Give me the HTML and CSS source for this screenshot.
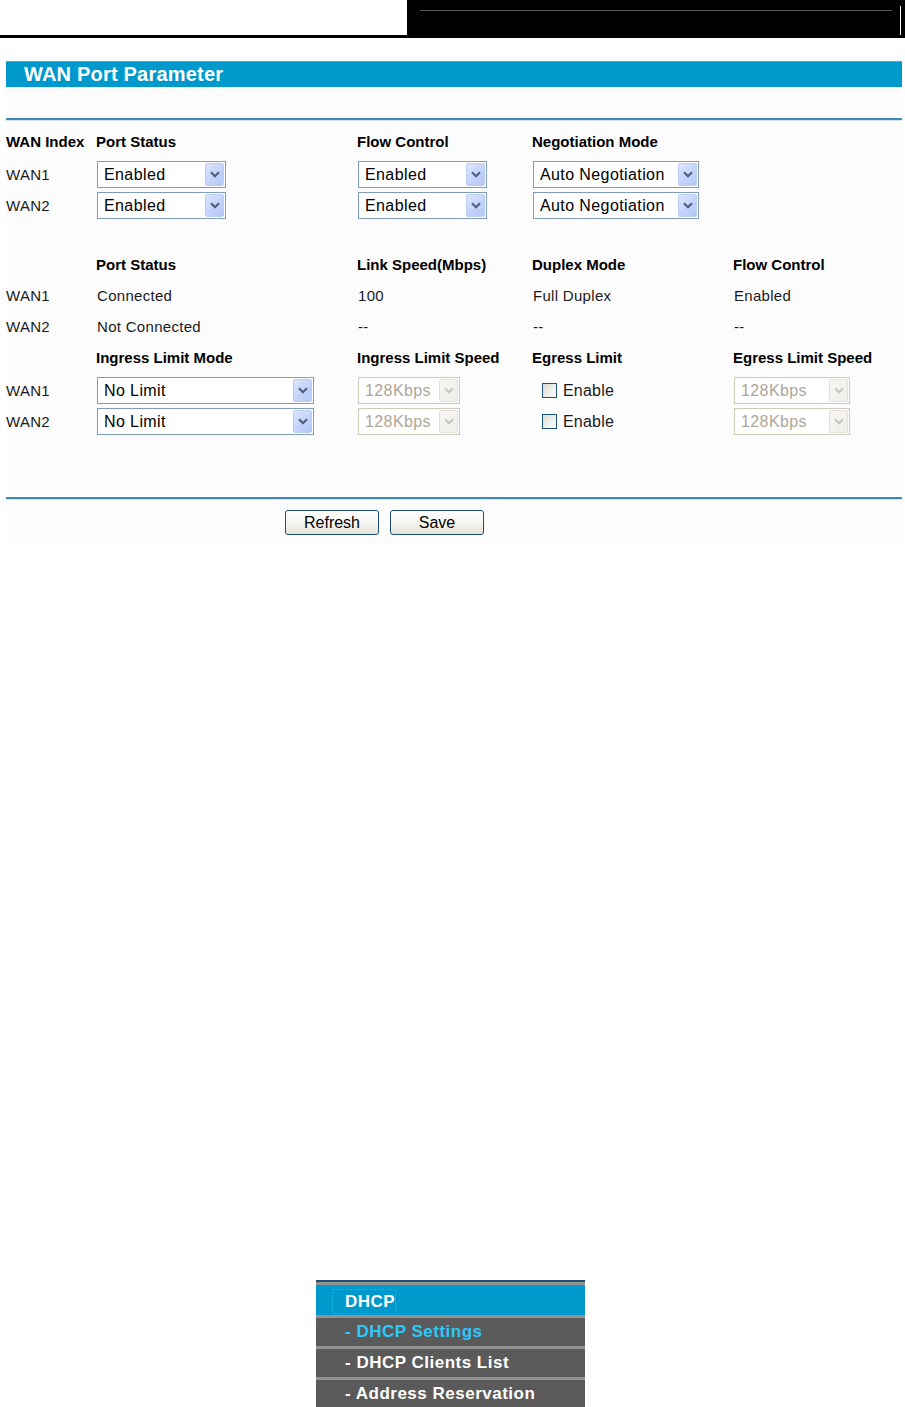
FILE: index.html
```html
<!DOCTYPE html>
<html>
<head>
<meta charset="utf-8">
<title>WAN Port Parameter</title>
<link rel="stylesheet" href="styles.css">
</head>
<body>
<div class="top">
  <div class="top-left"></div>
  <div class="top-right">
    <div class="top-rule"></div>
    <div class="top-vline"></div>
  </div>
</div>

<div class="panel">
  <div class="title">WAN Port Parameter</div>
  <div class="rule rule-top"></div>
  <div class="grid">
    <div class="h">WAN Index</div>
    <div class="h">Port Status</div>
    <div class="h">Flow Control</div>
    <div class="h">Negotiation Mode</div>
    <div class="h"></div>

    <div class="c">WAN1</div>
    <div class="c"><div class="sel w129"><span>Enabled</span><i class="arr"><svg viewBox="0 0 10 7" width="10" height="7"><path d="M1 1.2L5 5.2L9 1.2"/></svg></i></div></div>
    <div class="c"><div class="sel w129"><span>Enabled</span><i class="arr"><svg viewBox="0 0 10 7" width="10" height="7"><path d="M1 1.2L5 5.2L9 1.2"/></svg></i></div></div>
    <div class="c"><div class="sel w166"><span>Auto Negotiation</span><i class="arr"><svg viewBox="0 0 10 7" width="10" height="7"><path d="M1 1.2L5 5.2L9 1.2"/></svg></i></div></div>
    <div class="c"></div>

    <div class="c">WAN2</div>
    <div class="c"><div class="sel w129"><span>Enabled</span><i class="arr"><svg viewBox="0 0 10 7" width="10" height="7"><path d="M1 1.2L5 5.2L9 1.2"/></svg></i></div></div>
    <div class="c"><div class="sel w129"><span>Enabled</span><i class="arr"><svg viewBox="0 0 10 7" width="10" height="7"><path d="M1 1.2L5 5.2L9 1.2"/></svg></i></div></div>
    <div class="c"><div class="sel w166"><span>Auto Negotiation</span><i class="arr"><svg viewBox="0 0 10 7" width="10" height="7"><path d="M1 1.2L5 5.2L9 1.2"/></svg></i></div></div>
    <div class="c"></div>

    <div class="spacer"></div>

    <div class="h"></div>
    <div class="h">Port Status</div>
    <div class="h">Link Speed(Mbps)</div>
    <div class="h">Duplex Mode</div>
    <div class="h">Flow Control</div>

    <div class="c">WAN1</div>
    <div class="c t">Connected</div>
    <div class="c t">100</div>
    <div class="c t">Full Duplex</div>
    <div class="c t">Enabled</div>

    <div class="c">WAN2</div>
    <div class="c t">Not Connected</div>
    <div class="c t">--</div>
    <div class="c t">--</div>
    <div class="c t">--</div>

    <div class="h"></div>
    <div class="h">Ingress Limit Mode</div>
    <div class="h">Ingress Limit Speed</div>
    <div class="h">Egress Limit</div>
    <div class="h">Egress Limit Speed</div>

    <div class="c">WAN1</div>
    <div class="c"><div class="sel w217"><span>No Limit</span><i class="arr"><svg viewBox="0 0 10 7" width="10" height="7"><path d="M1 1.2L5 5.2L9 1.2"/></svg></i></div></div>
    <div class="c"><div class="sel dis w102"><span>128Kbps</span><i class="arr"><svg viewBox="0 0 10 7" width="10" height="7"><path d="M1 1.2L5 5.2L9 1.2"/></svg></i></div></div>
    <div class="c"><label class="chk"><span class="box"></span>Enable</label></div>
    <div class="c"><div class="sel dis w116"><span>128Kbps</span><i class="arr"><svg viewBox="0 0 10 7" width="10" height="7"><path d="M1 1.2L5 5.2L9 1.2"/></svg></i></div></div>

    <div class="c">WAN2</div>
    <div class="c"><div class="sel w217"><span>No Limit</span><i class="arr"><svg viewBox="0 0 10 7" width="10" height="7"><path d="M1 1.2L5 5.2L9 1.2"/></svg></i></div></div>
    <div class="c"><div class="sel dis w102"><span>128Kbps</span><i class="arr"><svg viewBox="0 0 10 7" width="10" height="7"><path d="M1 1.2L5 5.2L9 1.2"/></svg></i></div></div>
    <div class="c"><label class="chk"><span class="box"></span>Enable</label></div>
    <div class="c"><div class="sel dis w116"><span>128Kbps</span><i class="arr"><svg viewBox="0 0 10 7" width="10" height="7"><path d="M1 1.2L5 5.2L9 1.2"/></svg></i></div></div>
  </div>
  <div class="rule rule-bottom"></div>
  <div class="buttons">
    <button class="btn">Refresh</button>
    <button class="btn">Save</button>
  </div>
</div>

<div class="menu">
  <div class="mi mi-head"><span class="focus">DHCP</span></div>
  <div class="mi mi-active">- DHCP Settings</div>
  <div class="mi">- DHCP Clients List</div>
  <div class="mi">- Address Reservation</div>
</div>
</body>
</html>
```

FILE: styles.css
```css
html, body {
  margin: 0;
  padding: 0;
  background: #ffffff;
}

body {
  width: 905px;
  font-family: "Liberation Sans", Arial, sans-serif;
  color: #111;
}

/* top header */
.top {
  display: flex;
  height: 38px;
}
.top-left {
  width: 407px;
  height: 35px;
  border-bottom: 3px solid #000;
}
.top-right {
  width: 498px;
  height: 38px;
  background: #000;
  display: flex;
  align-items: flex-start;
}
.top-rule {
  width: 472px;
  height: 1px;
  margin-left: 13px;
  margin-top: 10px;
  background: #5a5a5a;
}
.top-vline {
  width: 1px;
  height: 29px;
  margin-left: 8px;
  margin-top: 6px;
  background: #fff;
}

/* panel */
.panel {
  margin: 23px 0 0 6px;
  width: 896px;
  background: #fcfcfc;
  padding-bottom: 11px;
}
.title {
  height: 26px;
  background: #0099cc;
  border-top: 1px solid #38b3db;
  box-sizing: border-box;
  color: #fff;
  font-weight: bold;
  font-size: 20px;
  line-height: 24px;
  padding-left: 18px;
  letter-spacing: 0.2px;
}
.rule {
  height: 2px;
  background: #3f89b3;
  box-shadow: 0 1px 0 #cfe2ee;
}
.rule-top {
  margin-top: 31px;
}
.rule-bottom {
  margin-top: 60px;
}

/* grid */
.grid {
  margin-top: 6px;
  display: grid;
  grid-template-columns: 90px 261px 175px 201px 1fr;
  grid-template-rows: 33px 31px 31px 28px 31px 31px 31px 33px 31px 31px;
  font-size: 15px;
  letter-spacing: 0.3px;
}
.h {
  align-self: start;
  line-height: 31px;
  font-weight: bold;
  letter-spacing: 0;
  color: #000;
  white-space: nowrap;
}
.c {
  align-self: center;
  white-space: nowrap;
  color: #1a1a1a;
}
.t {
  padding-left: 1px;
}
.spacer {
  grid-column: 1 / -1;
}

/* faux select */
.sel {
  box-sizing: border-box;
  height: 27px;
  border: 1px solid #7f9db9;
  background: #fff;
  display: flex;
  align-items: center;
  padding-left: 6px;
  font-size: 16px;
  letter-spacing: 0.4px;
  color: #000;
  margin-left: 1px;
}
.sel span {
  flex: 1;
}
.arr {
  box-sizing: border-box;
  width: 19px;
  height: 23px;
  margin-right: 1px;
  border: 1px solid #bccdf5;
  border-radius: 2px;
  background: linear-gradient(135deg, #dde6fd 0%, #c3d3fb 55%, #b4c7f5 100%);
  display: flex;
  align-items: center;
  justify-content: center;
}
.arr svg path {
  fill: none;
  stroke: #4d6185;
  stroke-width: 2.2;
}
.dis {
  border-color: #cdcabc;
  color: #aca899;
}
.dis .arr {
  border-color: #e3e1d7;
  background: linear-gradient(135deg, #f7f6f2 0%, #efeee8 100%);
}
.dis .arr svg path {
  stroke: #c9c7bc;
}

.w129 { width: 129px; }
.w166 { width: 166px; }
.w217 { width: 217px; }
.w102 { width: 102px; }
.w116 { width: 116px; }

/* checkbox */
.chk {
  display: flex;
  align-items: center;
  margin-left: 10px;
  font-size: 16px;
  letter-spacing: 0.2px;
  color: #1a1a1a;
}
.box {
  box-sizing: border-box;
  width: 15px;
  height: 15px;
  border: 1px solid #1c5180;
  background: linear-gradient(135deg, #d9d9d2 0%, #ededea 50%, #fbfbf9 100%);
  margin-right: 6px;
}

/* buttons */
.buttons {
  display: flex;
  gap: 11px;
  padding-left: 279px;
  margin-top: 11px;
}
.btn {
  box-sizing: border-box;
  width: 94px;
  height: 25px;
  border: 1px solid #1d4f7e;
  border-radius: 3px;
  background: linear-gradient(#ffffff 0%, #f5f4ef 60%, #e4e1d6 100%);
  font-family: "Liberation Sans", Arial, sans-serif;
  font-size: 16px;
  color: #000;
  padding: 0;
}

/* menu */
.menu {
  margin: 734px 0 0 316px;
  width: 269px;
  border-top: 2px solid #23506e;
  font-weight: bold;
  font-size: 17px;
  letter-spacing: 0.5px;
}
.mi {
  border-top: 3px solid #929292;
  height: 28px;
  background: #5a5a5a;
  color: #fff;
  line-height: 28px;
  padding-left: 29px;
  white-space: nowrap;
}
.mi-head {
  height: 30px;
  background: #0099cc;
  padding-left: 16px;
  line-height: 23px;
}
.focus {
  display: inline-block;
  box-sizing: border-box;
  height: 25px;
  margin-top: 4px;
  padding-left: 12px;
  border: 1px dotted #ff6a2a;
}
.mi-active {
  color: #2cc8fb;
}
```
